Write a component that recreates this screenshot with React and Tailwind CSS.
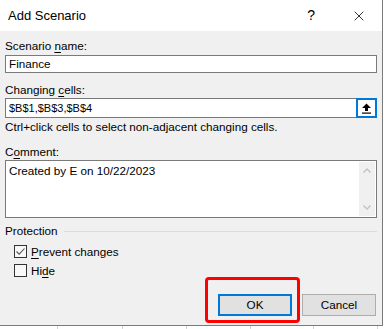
// App.jsx — Excel "Add Scenario" dialog

import { X } from 'lucide-react';

function U({ children }) {
  return <span className="underline underline-offset-2">{children}</span>;
}

function CheckBox({ checked, children }) {
  return (
    <div className="flex items-center h-[13px] gap-[4px]">
      <div className="w-[13px] h-[13px] border border-[#333] bg-[#f8f8f8] flex items-center justify-center">
        {checked && (
          <svg width="11" height="11" viewBox="0 0 11 11">
            <path d="M1.5 5.5 L4.2 8.2 L9.5 2.5" fill="none" stroke="#555" strokeWidth="1.1" />
          </svg>
        )}
      </div>
      <span>{children}</span>
    </div>
  );
}

export default function App() {
  const cols = [57, 122, 186, 250, 313, 377];

  return (
    <div
      className="w-[384px] h-[329px] bg-white relative overflow-hidden text-[11.7px] text-black"
      style={{ fontFamily: '"Liberation Sans", Arial, sans-serif' }}
    >
      {/* dialog */}
      <div className="w-[383px] h-[326px] border-r border-b border-[#7a7a7a] bg-[#f0f0f0] flex flex-col">
        {/* title bar */}
        <div className="h-[31px] bg-white flex items-center shrink-0">
          <span className="ml-[8px] text-[13px] flex-1">Add Scenario</span>
          <span className="text-[14px] mr-[36px]">?</span>
          <X size={16} strokeWidth={1.2} className="mr-[15px]" />
        </div>

        <div className="pl-[5px] pr-[5px] flex flex-col">
          <div className="mt-[7px] leading-[16px]">
            Scenario <U>n</U>ame:
          </div>
          <div className="mt-[1px] h-[18px] bg-white border border-[#7a7a7a] flex items-center px-[3px]">
            Finance
          </div>

          <div className="mt-[9px] leading-[16px]">
            Changing <U>c</U>ells:
          </div>
          <div className="h-[20px] bg-white border border-[#7a7a7a] border-r-0 flex items-center">
            <span className="flex-1 px-[3px] text-[11px]">$B$1,$B$3,$B$4</span>
            <div className="w-[21px] h-[20px] border-2 border-[#0078d7] bg-white flex items-center justify-center">
              <svg width="11" height="11" viewBox="0 0 11 11">
                <path d="M5.5 0.5 L10 5 L7 5 L7 8 L4 8 L4 5 L1 5 Z" fill="#000" />
                <rect x="1" y="9.5" width="9" height="1.2" fill="#000" />
              </svg>
            </div>
          </div>
          <div className="mt-[1px] leading-[16px]">
            Ctrl+click cells to select non-adjacent changing cells.
          </div>

          <div className="mt-[9px] leading-[16px]">
            C<U>o</U>mment:
          </div>
          <div className="h-[58px] bg-white border border-[#7a7a7a] flex">
            <span className="flex-1 px-[3px] pt-[1px]">Created by E on 10/22/2023</span>
            <div className="w-[16px] bg-[#f0f0f0] flex flex-col items-center justify-between py-[6px] mr-[1px] my-[1px]">
              <svg width="8" height="5" viewBox="0 0 8 5">
                <path d="M0.5 4.5 L4 1 L7.5 4.5" fill="none" stroke="#c2c2c2" strokeWidth="1.4" />
              </svg>
              <svg width="8" height="5" viewBox="0 0 8 5">
                <path d="M0.5 0.5 L4 4 L7.5 0.5" fill="none" stroke="#c2c2c2" strokeWidth="1.4" />
              </svg>
            </div>
          </div>

          <div className="mt-[5px] leading-[16px] flex items-center gap-[6px]">
            <span>Protection</span>
            <div className="flex-1 h-px bg-[#dcdcdc]" />
          </div>

          <div className="ml-[9px] mt-[6px] flex flex-col gap-[6px]">
            <CheckBox checked>
              <U>P</U>revent changes
            </CheckBox>
            <CheckBox>
              Hi<U>d</U>e
            </CheckBox>
          </div>

          <div className="mt-[17px] flex justify-end gap-[10px] pr-[1px]">
            <div className="w-[74px] h-[22px] bg-[#e1e1e1] border-2 border-[#0078d7] flex items-center justify-center">
              OK
            </div>
            <div className="w-[74px] h-[22px] bg-[#e1e1e1] border border-[#adadad] flex items-center justify-center">
              Cancel
            </div>
          </div>
        </div>
      </div>

      {/* worksheet grid below */}
      <div className="h-[3px] relative">
        {cols.map((x) => (
          <div key={x} className="absolute top-0 bottom-0 w-px bg-[#d4d4d4]" style={{ left: x }} />
        ))}
      </div>

      {/* red highlight annotation */}
      <div className="absolute left-[205px] top-[277px] w-[95px] h-[46px] border-[3px] border-[#ff0000] rounded-[4px]" />
    </div>
  );
}
